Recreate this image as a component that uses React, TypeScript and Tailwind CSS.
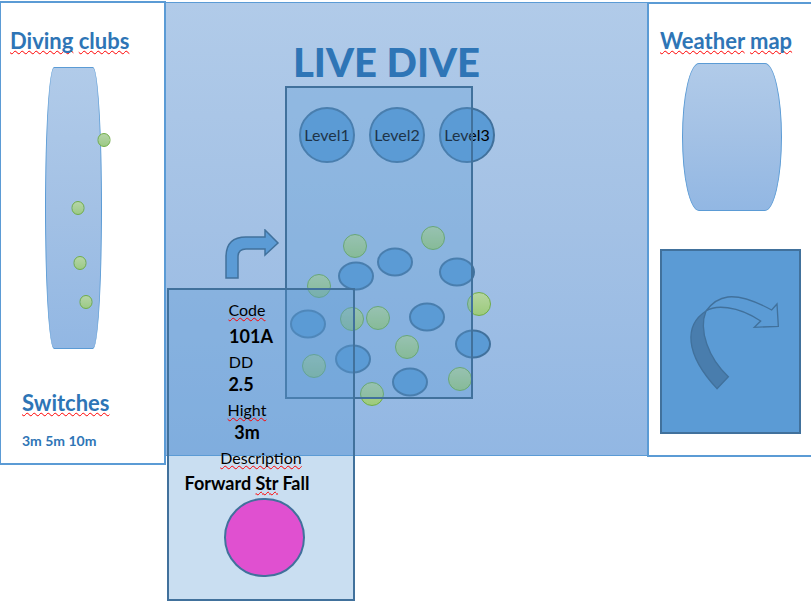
import type { ReactNode } from "react";

const water = "bg-linear-to-b from-[#b1cbe9] via-[#a3c1e5] to-[#92b7e3]";

const clubPins = [
  { x: 103, y: 137 },
  { x: 77, y: 205 },
  { x: 79, y: 260 },
  { x: 85, y: 299 },
];

const divers = [
  { x: 71, y: 190 },
  { x: 110, y: 176 },
  { x: 172, y: 186 },
  { x: 23, y: 238 },
  { x: 142, y: 231 },
  { x: 68, y: 273 },
  { x: 125, y: 296 },
  { x: 188, y: 258 },
];

const buoys = [
  { x: 70, y: 160 },
  { x: 148, y: 152 },
  { x: 34, y: 200 },
  { x: 67, y: 233 },
  { x: 93, y: 232 },
  { x: 29, y: 280 },
  { x: 122, y: 261 },
  { x: 175, y: 293 },
  { x: 194, y: 218 },
  { x: 87, y: 308 },
];

function Squiggle({ children }: { children: ReactNode }) {
  return (
    <span className="underline decoration-[#ff0000] decoration-wavy decoration-1 underline-offset-1 [text-decoration-skip-ink:none]">
      {children}
    </span>
  );
}

function ClubsPanel() {
  return (
    <aside className="relative mt-px w-[166px] shrink-0 border-2 border-l border-[#5b9bd5] bg-white pt-6 pb-[13px]">
      <h2 className="pl-[9px] text-[22px] leading-[28px] font-bold text-[#2e75b6]">
        <Squiggle>Diving</Squiggle> <Squiggle>clubs</Squiggle>
      </h2>
      <div className={`mt-3 ml-11 h-[282px] w-[57px] border border-[#5b9bd5] [border-radius:9px/50%] ${water}`} />
      {clubPins.map((p) => (
        <span
          key={p.y}
          className="absolute h-[14px] w-[13px] -translate-1/2 rounded-full border border-[#70ad47] bg-linear-to-b from-[#b5d5a7] to-[#9cca86]"
          style={{ left: p.x, top: p.y }}
        />
      ))}
      <h2 className="mt-10 pl-[21px] text-[22px] leading-[28px] font-bold text-[#2e75b6]">
        <Squiggle>Switches</Squiggle>
      </h2>
      <p className="mt-[15px] pl-[21px] text-[14px] leading-[18px] font-bold text-[#2e75b6]">3m 5m 10m</p>
    </aside>
  );
}

function Pool() {
  return (
    <div className="relative ml-[119px] h-[313px] w-[188px] pt-[21px] pl-[14px]">
      <div className="flex w-max gap-[14px]">
        {["Level1", "Level2", "Level3"].map((level) => (
          <button
            key={level}
            type="button"
            className="flex size-14 items-center justify-center rounded-full border-2 border-[#41719c] bg-[#5b9bd5] text-[16px] leading-[20px] text-black"
          >
            {level}
          </button>
        ))}
      </div>
      {buoys.map((b) => (
        <span
          key={`${b.x}-${b.y}`}
          className="absolute size-6 -translate-1/2 rounded-full border border-[#70ad47] bg-linear-to-b from-[#b5d5a0] to-[#9cca7b]"
          style={{ left: b.x, top: b.y }}
        />
      ))}
      {divers.map((d) => (
        <span
          key={`${d.x}-${d.y}`}
          className="absolute h-[29px] w-9 -translate-1/2 rounded-[50%] border-2 border-[#41719c] bg-[#5b9bd5]"
          style={{ left: d.x, top: d.y }}
        />
      ))}
      <div className="pointer-events-none absolute inset-0 border-2 border-[#41719c] bg-[#5b9bd5]/33" />
    </div>
  );
}

function DiveCard() {
  return (
    <article className="absolute top-[285px] left-px w-[188px] border-2 border-[#41719c] bg-[#5b9bd5]/33 pt-[9px] pb-[22px] text-center text-black">
      <dl className="flex flex-col gap-1 text-[16px] leading-[22px]">
        <div className="flex flex-col gap-1">
          <dt className="pr-7"><Squiggle>Code</Squiggle></dt>
          <dd className="pr-5 text-[18px] font-bold">101A</dd>
        </div>
        <div className="pr-10">
          <dt>DD</dt>
          <dd className="text-[18px] font-bold">2.5</dd>
        </div>
        <div className="pr-7">
          <dt><Squiggle>Hight</Squiggle></dt>
          <dd className="text-[18px] font-bold">3m</dd>
        </div>
        <div className="flex flex-col gap-[3px]">
          <dt><Squiggle>Description</Squiggle></dt>
          <dd className="pr-7 text-[18px] font-bold whitespace-nowrap">
            Forward <Squiggle>Str</Squiggle> Fall
          </dd>
        </div>
      </dl>
      <div className="mt-1 ml-[55px] h-[79px] w-[81px] rounded-full border-2 border-[#41719c] bg-[#e050d0]" />
    </article>
  );
}

function LiveDive() {
  return (
    <main className={`mt-[2px] min-w-[481px] flex-1 border-y border-[#5b9bd5] pb-14 ${water}`}>
      <div className="relative mx-auto w-[481px] pt-[35px]">
        <h1 className="pr-10 text-center text-[40px] leading-[48px] font-black text-[#2e75b6]">LIVE DIVE</h1>
        <Pool />
        <svg className="absolute top-[226px] left-[58px]" width="56" height="52" viewBox="224 229 56 52">
          <path
            d="M226 278V257Q226 237 246 237H265V230L278 243L265 255V249H246Q238 249 238 257V278Z"
            fill="#5b9bd5"
            stroke="#41719c"
            strokeWidth="1.5"
          />
        </svg>
        <DiveCard />
      </div>
    </main>
  );
}

function WeatherPanel() {
  return (
    <aside className="mt-[2px] w-[164px] shrink-0 border-2 border-r-0 border-[#5b9bd5] bg-white pt-[23px] pb-[21px] pl-[11px]">
      <h2 className="text-[22px] leading-[28px] font-bold whitespace-nowrap text-[#2e75b6]">
        <Squiggle>Weather</Squiggle> <Squiggle>map</Squiggle>
      </h2>
      <div className={`mt-2 ml-[22px] h-[148px] w-[100px] border border-[#5b9bd5] [border-radius:17px/50%] ${water}`} />
      <div className="mt-[38px] h-[185px] w-[141px] border-2 border-[#41719c] bg-[#5b9bd5]">
        <svg className="size-full" viewBox="66 63 411 543">
          <g stroke="#41719c" strokeWidth="4">
            <path
              d="M231 476C133 370 133 285 198 243C175 300 205 385 265 440Z"
              fill="#497dad"
            />
            <path
              d="M198 243C230 200 275 175 395 240L411 222L415 289L343 292L362 273C290 225 225 225 198 243Z"
              fill="none"
            />
          </g>
        </svg>
      </div>
    </aside>
  );
}

export default function App() {
  return (
    <div className="flex min-h-screen items-start overflow-x-hidden bg-white font-[Lato,Carlito,sans-serif]">
      <ClubsPanel />
      <LiveDive />
      <WeatherPanel />
    </div>
  );
}
